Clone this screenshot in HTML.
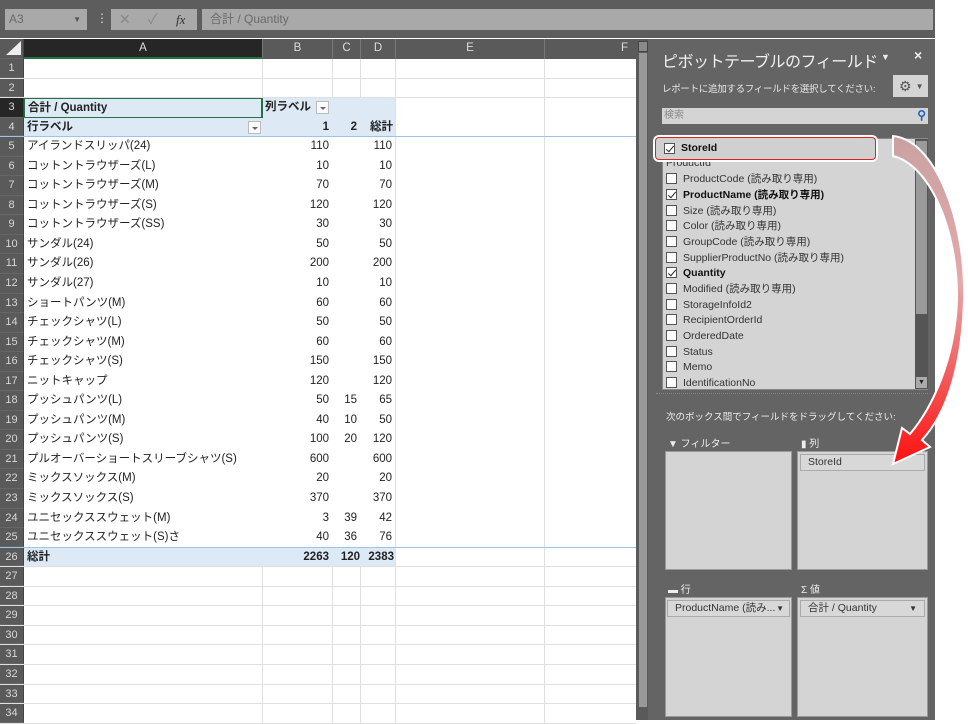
<!DOCTYPE html>
<html><head><meta charset="utf-8"><style>
*{margin:0;padding:0;box-sizing:border-box}
body{width:968px;height:720px;overflow:hidden;background:#fff;position:relative;font-family:"Liberation Sans","Noto Sans CJK JP",sans-serif;font-size:11.5px;color:#222}
.abs{position:absolute}
#top{left:0;top:0;width:936px;height:38px;background:#5d5d5d}
#grid{left:0;top:39px;width:636px}
.r{display:flex;height:19.56px;border-bottom:1px solid #e0e0e0;background:#fff}
.r>*{height:100%;line-height:19px;white-space:nowrap;overflow:hidden;font-style:normal;font-weight:normal;border-right:1px solid #e0e0e0}
.r>i{width:24px;background:#5a5a5a;color:#d8d8d8;text-align:center;border-right:1px solid #444;border-bottom:1px solid #666;font-size:11px}
.a{width:239px;padding-left:3px}.b{width:70px;text-align:right;padding-right:4px}.c{width:28px;text-align:right;padding-right:4px}.d{width:35px;text-align:right;padding-right:3px}.e{width:149px}.f{width:91px;border-right:none!important}
.p{border-right:none!important}
.r.pv{border-bottom:none}
.h>*{background:#5a5a5a;color:#ddd;text-align:center;padding:0;border-right:1px solid #777}
.bl{background:#dde9f5!important}
.bold{font-weight:bold!important}
.dd{display:inline-block;width:13px;height:13px;border:1px solid #bbb;background:#fafafa;vertical-align:middle;margin-left:5px;position:relative}
.dd:after{content:"";position:absolute;left:3px;top:5px;border:3px solid transparent;border-top:3px solid #666}
#panel{left:648px;top:39px;width:288px;height:681px;background:#646464}
.lt{color:#eee}
.fl{left:662px;top:138px;width:266px;height:252px;background:#d4d4d4;border:1px solid #888}
.it{position:absolute;left:3px;height:15.7px;display:flex;align-items:center;font-size:10.5px;color:#333;white-space:nowrap}
.cb{display:inline-block;flex-shrink:0;width:11px;height:11px;border:1px solid #555;background:#fff;margin-right:6px;position:relative}
.ck .cb:after{content:"";position:absolute;left:3px;top:0px;width:3px;height:7px;border:solid #222;border-width:0 1.3px 1.3px 0;transform:rotate(40deg)}
.ck{font-weight:bold;color:#111}
.box{position:absolute;background:#d4d4d4;border:1px solid #999}
.tag{position:absolute;left:2px;right:2px;top:2px;height:17px;background:#d8d8d8;border:1px solid #aaa;font-size:10.5px;line-height:15px;padding-left:7px;color:#333}
.lab{position:absolute;color:#eee;font-size:10px}
</style></head><body>
<div id="top" class="abs">
 <div class="abs" style="left:5px;top:9px;width:82px;height:21px;background:#a9a9a9;color:#6a6a6a;font-size:12px;line-height:21px;padding-left:4px">A3<span style="position:absolute;right:6px;top:0;font-size:8px;color:#555">▼</span></div>
 <div class="abs" style="left:96px;top:11px;color:#ddd;font-size:12px">⋮</div>
 <div class="abs" style="left:111px;top:9px;width:86px;height:21px;background:#a9a9a9;color:#888;font-size:14px;line-height:21px"><span style="position:absolute;left:8px">✕</span><span style="position:absolute;left:37px">✓</span><span style="position:absolute;left:65px;font-family:'Liberation Serif',serif;font-style:italic;font-size:13px;color:#333">fx</span></div>
 <div class="abs" style="left:202px;top:9px;width:731px;height:21px;background:#a9a9a9;color:#6a6a6a;font-size:12px;line-height:21px;padding-left:8px">合計 / Quantity</div>
</div>
<div id="grid" class="abs">
 <div class="r h" style="height:20px;border-bottom:none"><i style="background:#5a5a5a;position:relative"><span style="position:absolute;right:2px;bottom:3px;border-left:15px solid transparent;border-bottom:14px solid #eee"></span></i><b class="a" style="background:#262626;border-bottom:2px solid #217346">A</b><b class="b">B</b><b class="c" style="padding:0">C</b><b class="d" style="padding:0">D</b><b class="e">E</b><b class="f" style="text-align:right;padding-right:8px">F</b></div>
 <div class="r"><i>1</i><b class="a"></b><b class="b"></b><b class="c"></b><b class="d"></b><b class="e"></b><b class="f"></b></div>
 <div class="r"><i>2</i><b class="a"></b><b class="b"></b><b class="c"></b><b class="d"></b><b class="e"></b><b class="f"></b></div>
 <div class="r pv"><i style="background:#262626">3</i><b class="a bl bold" style="border:1px solid #217346;border-right:2px solid #217346">合計 / Quantity</b><b class="b bl bold p" style="text-align:left;padding-left:2px">列ラベル<span class="dd"></span></b><b class="c bl p"></b><b class="d bl"></b><b class="e"></b><b class="f"></b></div>
 <div class="r pv" style="border-bottom:1px solid #9dc3e6"><i>4</i><b class="a bl bold p" style="position:relative">行ラベル<span class="dd" style="position:absolute;right:2px;top:3px"></span></b><b class="b bl bold p">1</b><b class="c bl bold p">2</b><b class="d bl bold" style="padding-right:2px">総計</b><b class="e"></b><b class="f"></b></div>
 <div class="r pv"><i>5</i><b class="a p">アイランドスリッパ(24)</b><b class="b p">110</b><b class="c p"></b><b class="d">110</b><b class="e"></b><b class="f"></b></div>
 <div class="r pv"><i>6</i><b class="a p">コットントラウザーズ(L)</b><b class="b p">10</b><b class="c p"></b><b class="d">10</b><b class="e"></b><b class="f"></b></div>
 <div class="r pv"><i>7</i><b class="a p">コットントラウザーズ(M)</b><b class="b p">70</b><b class="c p"></b><b class="d">70</b><b class="e"></b><b class="f"></b></div>
 <div class="r pv"><i>8</i><b class="a p">コットントラウザーズ(S)</b><b class="b p">120</b><b class="c p"></b><b class="d">120</b><b class="e"></b><b class="f"></b></div>
 <div class="r pv"><i>9</i><b class="a p">コットントラウザーズ(SS)</b><b class="b p">30</b><b class="c p"></b><b class="d">30</b><b class="e"></b><b class="f"></b></div>
 <div class="r pv"><i>10</i><b class="a p">サンダル(24)</b><b class="b p">50</b><b class="c p"></b><b class="d">50</b><b class="e"></b><b class="f"></b></div>
 <div class="r pv"><i>11</i><b class="a p">サンダル(26)</b><b class="b p">200</b><b class="c p"></b><b class="d">200</b><b class="e"></b><b class="f"></b></div>
 <div class="r pv"><i>12</i><b class="a p">サンダル(27)</b><b class="b p">10</b><b class="c p"></b><b class="d">10</b><b class="e"></b><b class="f"></b></div>
 <div class="r pv"><i>13</i><b class="a p">ショートパンツ(M)</b><b class="b p">60</b><b class="c p"></b><b class="d">60</b><b class="e"></b><b class="f"></b></div>
 <div class="r pv"><i>14</i><b class="a p">チェックシャツ(L)</b><b class="b p">50</b><b class="c p"></b><b class="d">50</b><b class="e"></b><b class="f"></b></div>
 <div class="r pv"><i>15</i><b class="a p">チェックシャツ(M)</b><b class="b p">60</b><b class="c p"></b><b class="d">60</b><b class="e"></b><b class="f"></b></div>
 <div class="r pv"><i>16</i><b class="a p">チェックシャツ(S)</b><b class="b p">150</b><b class="c p"></b><b class="d">150</b><b class="e"></b><b class="f"></b></div>
 <div class="r pv"><i>17</i><b class="a p">ニットキャップ</b><b class="b p">120</b><b class="c p"></b><b class="d">120</b><b class="e"></b><b class="f"></b></div>
 <div class="r pv"><i>18</i><b class="a p">プッシュパンツ(L)</b><b class="b p">50</b><b class="c p">15</b><b class="d">65</b><b class="e"></b><b class="f"></b></div>
 <div class="r pv"><i>19</i><b class="a p">プッシュパンツ(M)</b><b class="b p">40</b><b class="c p">10</b><b class="d">50</b><b class="e"></b><b class="f"></b></div>
 <div class="r pv"><i>20</i><b class="a p">プッシュパンツ(S)</b><b class="b p">100</b><b class="c p">20</b><b class="d">120</b><b class="e"></b><b class="f"></b></div>
 <div class="r pv"><i>21</i><b class="a p">プルオーバーショートスリーブシャツ(S)</b><b class="b p">600</b><b class="c p"></b><b class="d">600</b><b class="e"></b><b class="f"></b></div>
 <div class="r pv"><i>22</i><b class="a p">ミックスソックス(M)</b><b class="b p">20</b><b class="c p"></b><b class="d">20</b><b class="e"></b><b class="f"></b></div>
 <div class="r pv"><i>23</i><b class="a p">ミックスソックス(S)</b><b class="b p">370</b><b class="c p"></b><b class="d">370</b><b class="e"></b><b class="f"></b></div>
 <div class="r pv"><i>24</i><b class="a p">ユニセックススウェット(M)</b><b class="b p">3</b><b class="c p">39</b><b class="d">42</b><b class="e"></b><b class="f"></b></div>
 <div class="r pv" style="border-bottom:1px solid #9dc3e6"><i>25</i><b class="a p">ユニセックススウェット(S)さ</b><b class="b p">40</b><b class="c p">36</b><b class="d">76</b><b class="e"></b><b class="f"></b></div>
 <div class="r"><i>26</i><b class="a bl bold p">総計</b><b class="b bl bold p">2263</b><b class="c bl bold p" style="padding-right:1px">120</b><b class="d bl bold" style="padding-right:1px">2383</b><b class="e"></b><b class="f"></b></div>
 <div class="r"><i>27</i><b class="a"></b><b class="b"></b><b class="c"></b><b class="d"></b><b class="e"></b><b class="f"></b></div>
 <div class="r"><i>28</i><b class="a"></b><b class="b"></b><b class="c"></b><b class="d"></b><b class="e"></b><b class="f"></b></div>
 <div class="r"><i>29</i><b class="a"></b><b class="b"></b><b class="c"></b><b class="d"></b><b class="e"></b><b class="f"></b></div>
 <div class="r"><i>30</i><b class="a"></b><b class="b"></b><b class="c"></b><b class="d"></b><b class="e"></b><b class="f"></b></div>
 <div class="r"><i>31</i><b class="a"></b><b class="b"></b><b class="c"></b><b class="d"></b><b class="e"></b><b class="f"></b></div>
 <div class="r"><i>32</i><b class="a"></b><b class="b"></b><b class="c"></b><b class="d"></b><b class="e"></b><b class="f"></b></div>
 <div class="r"><i>33</i><b class="a"></b><b class="b"></b><b class="c"></b><b class="d"></b><b class="e"></b><b class="f"></b></div>
 <div class="r"><i>34</i><b class="a"></b><b class="b"></b><b class="c"></b><b class="d"></b><b class="e"></b><b class="f"></b></div>
</div>
<div class="abs" style="left:636px;top:39px;width:12px;height:681px;background:#5a5a5a"></div>
<div class="abs" style="left:638px;top:41px;width:10px;height:11px;background:#8a8a8a;border:1px solid #444"></div>
<div class="abs" style="left:639px;top:53px;width:8px;height:654px;background:#999"></div>
<div id="panel" class="abs">
 <div class="abs lt" style="left:14px;top:9px;font-size:16px;letter-spacing:-0.5px;color:#f0f0f0">ピボットテーブルのフィールド</div>
 <div class="abs lt" style="left:233px;top:13px;font-size:9px">▼</div>
 <div class="abs lt" style="left:266px;top:8px;font-size:14px;font-weight:bold">×</div>
 <div class="abs lt" style="left:14px;top:42px;font-size:9.5px;letter-spacing:-0.3px;color:#e8e8e8">レポートに追加するフィールドを選択してください:</div>
 <div class="abs" style="left:245px;top:36px;width:35px;height:22px;background:#d4d4d4;color:#555;font-size:14px;line-height:22px;padding-left:6px">⚙<span style="font-size:8px;margin-left:4px;vertical-align:2px">▼</span></div>
 <div class="abs" style="left:14px;top:69px;width:266px;height:16px;background:#d4d4d4;color:#888;font-size:10px;line-height:16px;padding-left:2px">検索<span style="position:absolute;right:2px;top:-1px;color:#1f5fbf;font-size:12px;font-weight:bold">⚲</span></div>
 <div class="abs" style="left:8px;top:354px;width:272px;border-top:1px dotted #888"></div>
 <div class="abs" style="left:18px;top:370px;font-size:9.5px;color:#eee">次のボックス間でフィールドをドラッグしてください:</div>
 <div class="lab" style="left:20px;top:396px">▼ フィルター</div>
 <div class="lab" style="left:153px;top:396px">▮ 列</div>
 <div class="lab" style="left:20px;top:542px">▬ 行</div>
 <div class="lab" style="left:153px;top:542px">Σ 値</div>
 <div class="box" style="left:17px;top:412px;width:127px;height:119px"></div>
 <div class="box" style="left:149px;top:412px;width:131px;height:119px"><div class="tag">StoreId</div></div>
 <div class="box" style="left:17px;top:558px;width:127px;height:120px"><div class="tag" style="left:1px;right:1px">ProductName (読み... <span style="position:absolute;right:5px;font-size:8px">▼</span></div></div>
 <div class="box" style="left:149px;top:558px;width:131px;height:120px"><div class="tag">合計 / Quantity<span style="position:absolute;right:7px;font-size:8px">▼</span></div></div>
</div>
<div class="abs fl">
 <div class="it" style="top:16px">ProductId</div>
 <div class="it" style="top:32px"><span class="cb"></span>ProductCode (読み取り専用)</div>
 <div class="it ck" style="top:48px"><span class="cb"></span>ProductName (読み取り専用)</div>
 <div class="it" style="top:64px"><span class="cb"></span>Size (読み取り専用)</div>
 <div class="it" style="top:79px"><span class="cb"></span>Color (読み取り専用)</div>
 <div class="it" style="top:95px"><span class="cb"></span>GroupCode (読み取り専用)</div>
 <div class="it" style="top:111px"><span class="cb"></span>SupplierProductNo (読み取り専用)</div>
 <div class="it ck" style="top:126px"><span class="cb"></span>Quantity</div>
 <div class="it" style="top:142px"><span class="cb"></span>Modified (読み取り専用)</div>
 <div class="it" style="top:158px"><span class="cb"></span>StorageInfoId2</div>
 <div class="it" style="top:173px"><span class="cb"></span>RecipientOrderId</div>
 <div class="it" style="top:189px"><span class="cb"></span>OrderedDate</div>
 <div class="it" style="top:205px"><span class="cb"></span>Status</div>
 <div class="it" style="top:220px"><span class="cb"></span>Memo</div>
 <div class="it" style="top:236px"><span class="cb"></span>IdentificationNo</div>
 <div class="abs" style="left:252px;top:0;width:13px;height:250px;background:#555"></div>
 <div class="abs" style="left:253px;top:2px;width:11px;height:173px;background:#9a9a9a"></div>
 <div class="abs" style="left:253px;top:238px;width:11px;height:11px;background:#aaa;font-size:7px;text-align:center;line-height:11px">▼</div>
</div>
<div class="abs" style="left:655px;top:137px;width:221px;height:23px;border:1.5px solid #e02020;border-radius:4px;background:#d0d0d0;box-shadow:0 0 0 2px #fff"></div>
<div class="abs ck" style="left:664px;top:141px;font-size:10.5px;display:flex;align-items:center;height:14px"><span class="cb"></span>StoreId</div>
<div class="abs" style="left:935px;top:0;width:33px;height:720px;background:#fff"></div>
<svg class="abs" style="left:0;top:0" width="968" height="720">
<defs><linearGradient id="g" x1="0" y1="0" x2="0" y2="1"><stop offset="0" stop-color="#c9a2a2"/><stop offset="0.45" stop-color="#e6a8aa"/><stop offset="1" stop-color="#ff1010"/></linearGradient></defs>
<path d="M893,136 C935,140 966,220 964,300 C962,370 945,415 922,440 L930,447 L893,464 L902,428 L910,434 C932,408 955,360 957,300 C958,230 930,165 893,156 Z" fill="url(#g)" stroke="#fff" stroke-width="2"/>
</svg>
</body></html>
